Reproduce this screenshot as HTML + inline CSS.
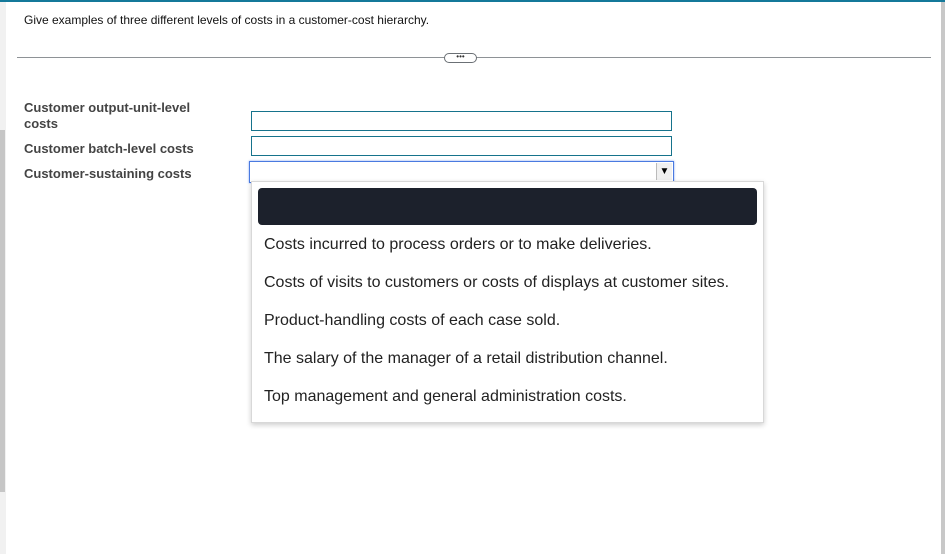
<!DOCTYPE html>
<html><head><style>
body{margin:0;width:945px;height:554px;background:#fff;position:relative;overflow:hidden;font-family:"Liberation Sans",Arial,sans-serif}
.a{position:absolute}
</style></head><body>
<div class="a" style="left:0;top:0;width:945px;height:2px;background:#14799a"></div>
<div class="a" style="left:0;top:2px;width:6px;height:552px;background:#f1f1f1"></div>
<div class="a" style="left:0;top:130px;width:5px;height:362px;background:#c6c6c6"></div>
<div class="a" style="left:941px;top:2px;width:4px;height:552px;background:#c8c8c8"></div>
<div class="a" style="left:24px;top:13px;font-size:12px;color:#111">Give examples of three different levels of costs in a customer-cost hierarchy.</div>
<div class="a" style="left:17px;top:57px;width:914px;height:1px;background:#8e9296"></div>
<div class="a" style="left:444px;top:53px;width:31px;height:8px;border:1px solid #6b7075;border-radius:5px;background:#fff;font-size:8px;line-height:6px;text-align:center;color:#333">•••</div>
<div class="a" style="left:24px;top:100px;font-size:13px;font-weight:bold;color:#444;line-height:16px">Customer output-unit-level<br>costs</div>
<div class="a" style="left:24px;top:141px;font-size:13px;font-weight:bold;color:#444">Customer batch-level costs</div>
<div class="a" style="left:24px;top:166px;font-size:13px;font-weight:bold;color:#444">Customer-sustaining costs</div>
<div class="a" style="left:251px;top:111px;width:419px;height:18px;border:1px solid #16738c"></div>
<div class="a" style="left:251px;top:136px;width:419px;height:18px;border:1px solid #16738c"></div>
<div class="a" style="left:249px;top:161px;width:423px;height:20px;border:1px solid #4a7ae0;box-shadow:0 0 2px #7fa0f0"></div>
<div class="a" style="left:656px;top:163px;width:15px;height:17px;background:#f0f0f0;border-left:1px solid #bbb;font-size:10px;text-align:center;line-height:17px">▼</div>
<div class="a" style="left:251px;top:181px;width:511px;height:240px;border:1px solid #d8d8d8;box-shadow:0 2px 5px rgba(0,0,0,.2);background:#fff"></div>
<div class="a" style="left:258px;top:188px;width:499px;height:37px;background:#1c212c;border-radius:4px"></div>
<div class="a" style="left:264px;top:235px;font-size:16px;color:#222;line-height:19px">
<div style="height:38px">Costs incurred to process orders or to make deliveries.</div>
<div style="height:38px">Costs of visits to customers or costs of displays at customer sites.</div>
<div style="height:38px">Product-handling costs of each case sold.</div>
<div style="height:38px">The salary of the manager of a retail distribution channel.</div>
<div style="height:38px">Top management and general administration costs.</div>
</div>
</body></html>
